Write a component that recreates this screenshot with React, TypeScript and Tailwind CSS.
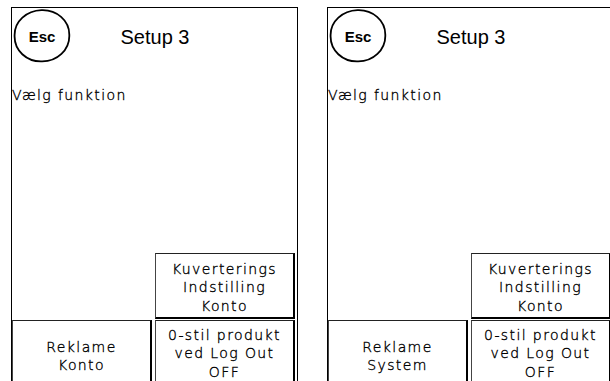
import React from "react";

const body = { fontFamily: '"DejaVu Sans", "Liberation Sans", sans-serif' };
const arial = { fontFamily: '"Liberation Sans", Arial, sans-serif' };

function Btn({ lines, className = "" }: { lines: string[]; className?: string }) {
  return (
    <div
      className={
        "flex flex-col items-center justify-center bg-white border-t border-l border-t-[#222] border-l-[#444] border-b-2 border-r-2 border-black text-[14px] leading-[18.5px] tracking-[1.4px] font-extralight [-webkit-text-stroke:0.35px_black] text-black text-center " +
        className
      }
      style={body}
    >
      {lines.map((l, i) => (
        <div key={i} className="whitespace-nowrap">
          {l}
        </div>
      ))}
    </div>
  );
}

function EscButton() {
  return (
    <div className="relative w-[58px] h-[54px] flex items-center justify-center">
      <svg className="absolute inset-0" width="58" height="54" viewBox="0 0 58 54" fill="none">
        <path
          d="M 28.5 1.2 C 43.5 0.6, 56.5 11.5, 56.3 26 C 56.8 41, 44 52.6, 28.8 52.4 C 13.5 52.8, 1.2 41.5, 1.6 26.8 C 1.2 12, 13.8 1.8, 28.5 1.2 Z"
          stroke="black"
          strokeWidth="1.8"
        />
      </svg>
      <span className="relative text-[15px] font-bold text-black mt-[3px]" style={arial}>
        Esc
      </span>
    </div>
  );
}

function Panel({ left }: { left: string[] }) {
  return (
    <div className="w-[287px] h-[380px] shrink-0 border border-black flex flex-col bg-white">
      <div className="grid grid-cols-[1fr_auto_1fr] items-start h-[54px] pl-[1px] pt-[1px]">
        <EscButton />
        <div className="text-[20px] text-black pt-[16px] leading-[24px]" style={arial}>
          Setup 3
        </div>
        <div />
      </div>
      <div
        className="mt-[24px] text-[14px] leading-[18px] tracking-[1.4px] font-extralight [-webkit-text-stroke:0.35px_black] text-black"
        style={body}
      >
        Vælg funktion
      </div>
      <div className="flex-1" />
      <div className="grid grid-cols-[140px_140px] grid-rows-[66px_66px] gap-x-[3px] gap-y-[1px]">
        <div />
        <Btn lines={["Kuverterings", "Indstilling", "Konto"]} className="pt-[4px]" />
        <Btn lines={left} className="pt-[7px]" />
        <Btn lines={["0-stil produkt", "ved Log Out", "OFF"]} className="pt-[2px]" />
      </div>
    </div>
  );
}

export default function App() {
  return (
    <div className="w-[610px] h-[381px] overflow-hidden bg-white">
      <div className="flex gap-[29px] pl-[11px] pt-[7px]">
        <Panel left={["Reklame", "Konto"]} />
        <Panel left={["Reklame", "System"]} />
      </div>
    </div>
  );
}
